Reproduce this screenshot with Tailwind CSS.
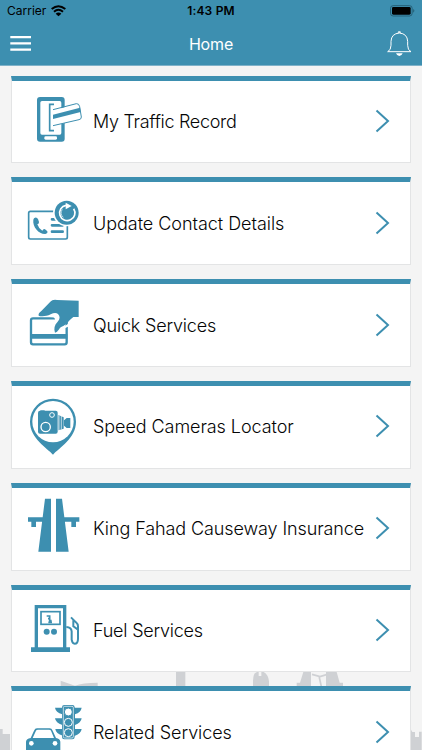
<!DOCTYPE html>
<html lang="en">
<head>
<meta charset="utf-8">
<meta name="viewport" content="width=device-width, initial-scale=1">
<title>Home</title>
<script src="https://cdn.jsdelivr.net/npm/@tailwindcss/browser@4"></script>
</head>
<body class="bg-[#f4f4f4] font-['Inter','Liberation_Sans',sans-serif] text-black">
<div class="relative h-[750px] w-[422px] overflow-hidden">
  <!-- Skyline behind the list -->
  <svg class="absolute left-0 top-[660px]" width="422" height="90" viewBox="0 0 1266 270" fill="#cfd1d4">
    <path d="M185 62L228 77Q250 68 296 68V90H185zM531 36h28v50h-28zM762 86V62Q763 38 774 36h5v12h8V36h7q14 8 16 28v22zM893 86V68h10l10-32h23v50zM981 86V36h32l9 32h10v18zM3 270v-63h8v15h22v48zM1233 270v-66l7 12h8v15h12v-16h8v55z" transform="translate(-3 0)"/>
    <path d="M936 43l24 7 22-7M957 48l8 36" fill="none" stroke="#cfd1d4" stroke-width="5"/>
  </svg>

  <header class="relative h-[66px] border-b border-[#7fb2c9] bg-[#3d8fb0]">
    <div class="flex h-[22px] items-center pl-[7px] pr-[7px] text-[12px]">
      <div class="flex flex-1 items-center gap-[5px]"><span class="tracking-[0]">Carrier</span>
        <svg width="15" height="12" viewBox="0 0 45 34" fill="none" stroke="#000" stroke-width="6"><path d="M2 11Q22-6 43 11M9 19Q22 8 36 19"/><path d="M14 25Q22 18 31 25L22.500 33z" fill="#000" stroke="none"/></svg>
      </div>
      <span class="font-semibold tracking-[0.2px]">1:43 PM</span>
      <div class="flex flex-1 justify-end"><svg width="25" height="12" viewBox="0 0 75 36"><rect x="1.500" y="2" width="65" height="31" rx="8" fill="none" stroke="#20576c" stroke-width="2.500"/><rect x="6" y="6" width="56" height="23" rx="4"/><path d="M70 12q6 5 0 11z" fill="#20576c"/></svg></div>
    </div>
    <div class="flex h-[43px] items-center justify-between pl-[10px] pr-[10px] text-white">
      <svg class="mr-[3px]" width="22" height="16" viewBox="0 0 22 16" fill="#fff"><path d="M.3 0h20.700v2.200H.3zM.3 6.300h20.700v2.200H.3zM.3 12.500h20.700v2.200H.3z"/></svg>
      <h1 class="text-[16px] tracking-[-0.150px]">Home</h1>
      <svg width="25" height="26" viewBox="0 0 75 78" fill="none" stroke="#fff" stroke-width="3"><path d="M2 62Q12 58 12 43V31Q13 8 37 6Q61 8 62 31V43Q62 58 72 62z"/><path d="M32 5a5 4 0 0 1 10 0zM27 67h20q-3 8-10 8t-10-8z" fill="#fff" stroke="none"/></svg>
    </div>
  </header>

  <main class="relative flex flex-col gap-[14px] px-[11px] pt-[9.600px] text-[18px] font-light text-[#050505]">
    <a class="flex h-[87.800px] shrink-0 items-center border border-t-[5px] border-[#e3e4e5] border-t-[#3d8fb0] bg-white">
      <svg class="shrink-0" width="80" height="82" viewBox="6 31 240 246"><rect x="81" y="79" width="83" height="134" rx="9" fill="#3d8fb0"/><rect x="91" y="91" width="63" height="101" rx="5" fill="#fff"/><rect x="103" y="197" width="38" height="10" rx="4" fill="#fff"/><path d="M126 121L198 99Q207 97 210 107L217 142L130 167z" fill="#fff"/><path d="M132 101h-13v79h13" fill="none" stroke="#3d8fb0" stroke-width="5"/><path d="M129 117L199 99Q207 98 209 108L214 139Q214 146 207 147L129 165" fill="none" stroke="#3d8fb0" stroke-width="3"/><path d="M129 132L210 111L212 124L129 145z" fill="#3d8fb0"/></svg>
      <span class="ml-[1px] flex-1 whitespace-nowrap tracking-[-0.310px]">My Traffic Record</span>
      <svg class="mr-[20px] -mt-px shrink-0" width="15" height="24" viewBox="0 0 15 24" fill="none" stroke="#3d8fb0" stroke-width="2"><path d="M1.500 1.500L13 12 1.500 22.500"/></svg>
    </a>
    <a class="flex h-[87.800px] shrink-0 items-center border border-t-[5px] border-[#e3e4e5] border-t-[#3d8fb0] bg-white">
      <svg class="shrink-0" width="80" height="82" viewBox="6 31 240 246"><rect x="56" y="119" width="116" height="83" rx="5" fill="none" stroke="#3d8fb0" stroke-width="5"/><path d="M72 140Q79 134 84 142L87 151Q88 156 82 158Q86 171 97 177Q101 169 107 174L112 179Q114 185 106 187C87 188 67 166 70 144z" fill="#3d8fb0"/><path d="M126 143h18M126 161h32M126 180h32" stroke="#3d8fb0" stroke-width="8" stroke-linecap="round"/><circle cx="170" cy="123" r="41" fill="#fff"/><circle cx="170" cy="123" r="36" fill="#3d8fb0"/><path d="M191 111A23 23 0 1 1 168 101" fill="none" stroke="#fff" stroke-width="5"/><path d="M167 93l18 10-18 10z" fill="#fff"/><path d="M157 113A17 17 0 0 0 160 137" stroke="#fff" stroke-width="2" fill="none"/></svg>
      <span class="ml-[1px] flex-1 whitespace-nowrap tracking-[-0.040px]">Update Contact Details</span>
      <svg class="mr-[20px] -mt-px shrink-0" width="15" height="24" viewBox="0 0 15 24" fill="none" stroke="#3d8fb0" stroke-width="2"><path d="M1.500 1.500L13 12 1.500 22.500"/></svg>
    </a>
    <a class="flex h-[87.800px] shrink-0 items-center border border-t-[5px] border-[#e3e4e5] border-t-[#3d8fb0] bg-white">
      <svg class="shrink-0" width="80" height="82" viewBox="6 31 240 246"><rect x="63" y="134" width="107" height="78" rx="6" fill="none" stroke="#3d8fb0" stroke-width="7"/><path d="M62 181h110v14H62z" fill="#3d8fb0"/><path d="M84 128L133 112L157 127L129 181L180 156L205 132V130L168 155Q154 161 149 173Q142 184 133 177Q125 157 133 145Q138 135 130 131z" fill="#fff"/><path d="M86 126Q84 119 94 112L121 84Q127 77 141 79L206 81V130L190 130C174 142 174 151 155 159C147 162 145 175 135 177C131 165 133 154 143 144Q154 132 144 121Q136 115 122 122C109 129 92 129 86 126z" fill="#3d8fb0"/></svg>
      <span class="ml-[1px] flex-1 whitespace-nowrap tracking-[-0.190px]">Quick Services</span>
      <svg class="mr-[20px] -mt-px shrink-0" width="15" height="24" viewBox="0 0 15 24" fill="none" stroke="#3d8fb0" stroke-width="2"><path d="M1.500 1.500L13 12 1.500 22.500"/></svg>
    </a>
    <a class="flex h-[87.800px] shrink-0 items-center border border-t-[5px] border-[#e3e4e5] border-t-[#3d8fb0] bg-white">
      <svg class="shrink-0" width="80" height="82" viewBox="6 31 240 246"><path d="M129 237C112 217 60 188 60 138A69 69 0 0 1 198 138C198 188 146 217 129 237z" fill="#3d8fb0"/><circle cx="129" cy="138" r="62" fill="#fff"/><rect x="84" y="105" width="59" height="69" rx="6" fill="#3d8fb0"/><path d="M91 104h13v3H91z" fill="#3d8fb0"/><circle cx="126" cy="118" r="7" fill="none" stroke="#fff" stroke-width="3"/><circle cx="107" cy="154" r="14" fill="none" stroke="#fff" stroke-width="4"/><path d="M145 118l16 7v34l-16 5zM162 134l8-7h11v30h-11l-8-7z" fill="#3d8fb0"/><path d="M147 119v44M154 121v40" stroke="#fff" stroke-width="2"/></svg>
      <span class="ml-[1px] flex-1 whitespace-nowrap tracking-[-0.070px]">Speed Cameras Locator</span>
      <svg class="mr-[20px] -mt-px shrink-0" width="15" height="24" viewBox="0 0 15 24" fill="none" stroke="#3d8fb0" stroke-width="2"><path d="M1.500 1.500L13 12 1.500 22.500"/></svg>
    </a>
    <a class="flex h-[87.800px] shrink-0 items-center border border-t-[5px] border-[#e3e4e5] border-t-[#3d8fb0] bg-white">
      <svg class="shrink-0" width="80" height="82" viewBox="6 31 240 246" fill="#3d8fb0"><path d="M105 63h18v159H85zM138 63h18l20 159h-38zM54 119h50v13H78v16H64v-16H54zM158 119h50v13h-10v16h-14v-16h-26z"/></svg>
      <span class="ml-[1px] flex-1 whitespace-nowrap tracking-[-0.100px]">King Fahad Causeway Insurance</span>
      <svg class="mr-[20px] -mt-px shrink-0" width="15" height="24" viewBox="0 0 15 24" fill="none" stroke="#3d8fb0" stroke-width="2"><path d="M1.500 1.500L13 12 1.500 22.500"/></svg>
    </a>
    <a class="flex h-[87.800px] shrink-0 items-center border border-t-[5px] border-[#e3e4e5] border-t-[#3d8fb0] bg-white">
      <svg class="shrink-0" width="80" height="82" viewBox="6 31 240 246" fill="none" stroke="#3d8fb0"><path d="M79 209V84h85v125" stroke-width="10"/><path d="M63 213h117" stroke-width="14"/><rect x="93" y="99" width="57" height="38" stroke-width="5"/><path d="M110 112h9v8h-5M119 118v14M115 131h11M119 126h6" stroke-width="5"/><circle cx="110" cy="159" r="9" fill="#3d8fb0" stroke="none"/><circle cx="132" cy="159" r="9" fill="#3d8fb0" stroke="none"/><path d="M169 145Q184 146 185 158V183Q187 195 194 195Q204 195 204 180V143Q204 136 198 131L183 116M190 124v19l13 9" stroke-width="6"/></svg>
      <span class="ml-[1px] flex-1 whitespace-nowrap tracking-[-0.230px]">Fuel Services</span>
      <svg class="mr-[20px] -mt-px shrink-0" width="15" height="24" viewBox="0 0 15 24" fill="none" stroke="#3d8fb0" stroke-width="2"><path d="M1.500 1.500L13 12 1.500 22.500"/></svg>
    </a>
    <a class="flex h-[87.800px] shrink-0 items-center border border-t-[5px] border-[#e3e4e5] border-t-[#3d8fb0] bg-white">
      <svg class="shrink-0" width="80" height="82" viewBox="36 95 240 246" fill="#3d8fb0"><path d="M165 145h80q-2 14-20 20v12h20q-2 14-20 20v12h20q-2 14-20 20h-36q-22-6-23-20h21v-12q-20-6-22-20h22v-12q-20-6-22-20z"/><rect x="186" y="137" width="38" height="103" rx="7"/><rect x="190" y="141" width="30" height="95" rx="4" fill="none" stroke="#fff" stroke-width="2"/><g stroke="#fff" stroke-width="3"><circle cx="205" cy="158" r="12" fill="#fff" stroke="#3d8fb0"/><circle cx="205" cy="189" r="12"/><circle cx="205" cy="220" r="12"/></g><path d="M72 275v-28l16-10 12-31q3-6 9-6h44q7 0 10 7l12 32 13 10v26z" fill="#fff"/><path d="M78 275v-28q1-9 14-11l10-22q3-7 9-7h38q6 0 9 7l10 22q12 2 13 11v28z"/><path d="M98 236l10-22q1-3 6-3h33q5 0 6 3l9 22z" fill="#fff"/><circle cx="94" cy="252" r="7" fill="#fff"/><circle cx="165" cy="252" r="7" fill="#fff"/></svg>
      <span class="ml-[1px] flex-1 whitespace-nowrap tracking-[-0.060px]">Related Services</span>
      <svg class="mr-[20px] -mt-px shrink-0" width="15" height="24" viewBox="0 0 15 24" fill="none" stroke="#3d8fb0" stroke-width="2"><path d="M1.500 1.500L13 12 1.500 22.500"/></svg>
    </a>
  </main>
</div>
</body>
</html>
